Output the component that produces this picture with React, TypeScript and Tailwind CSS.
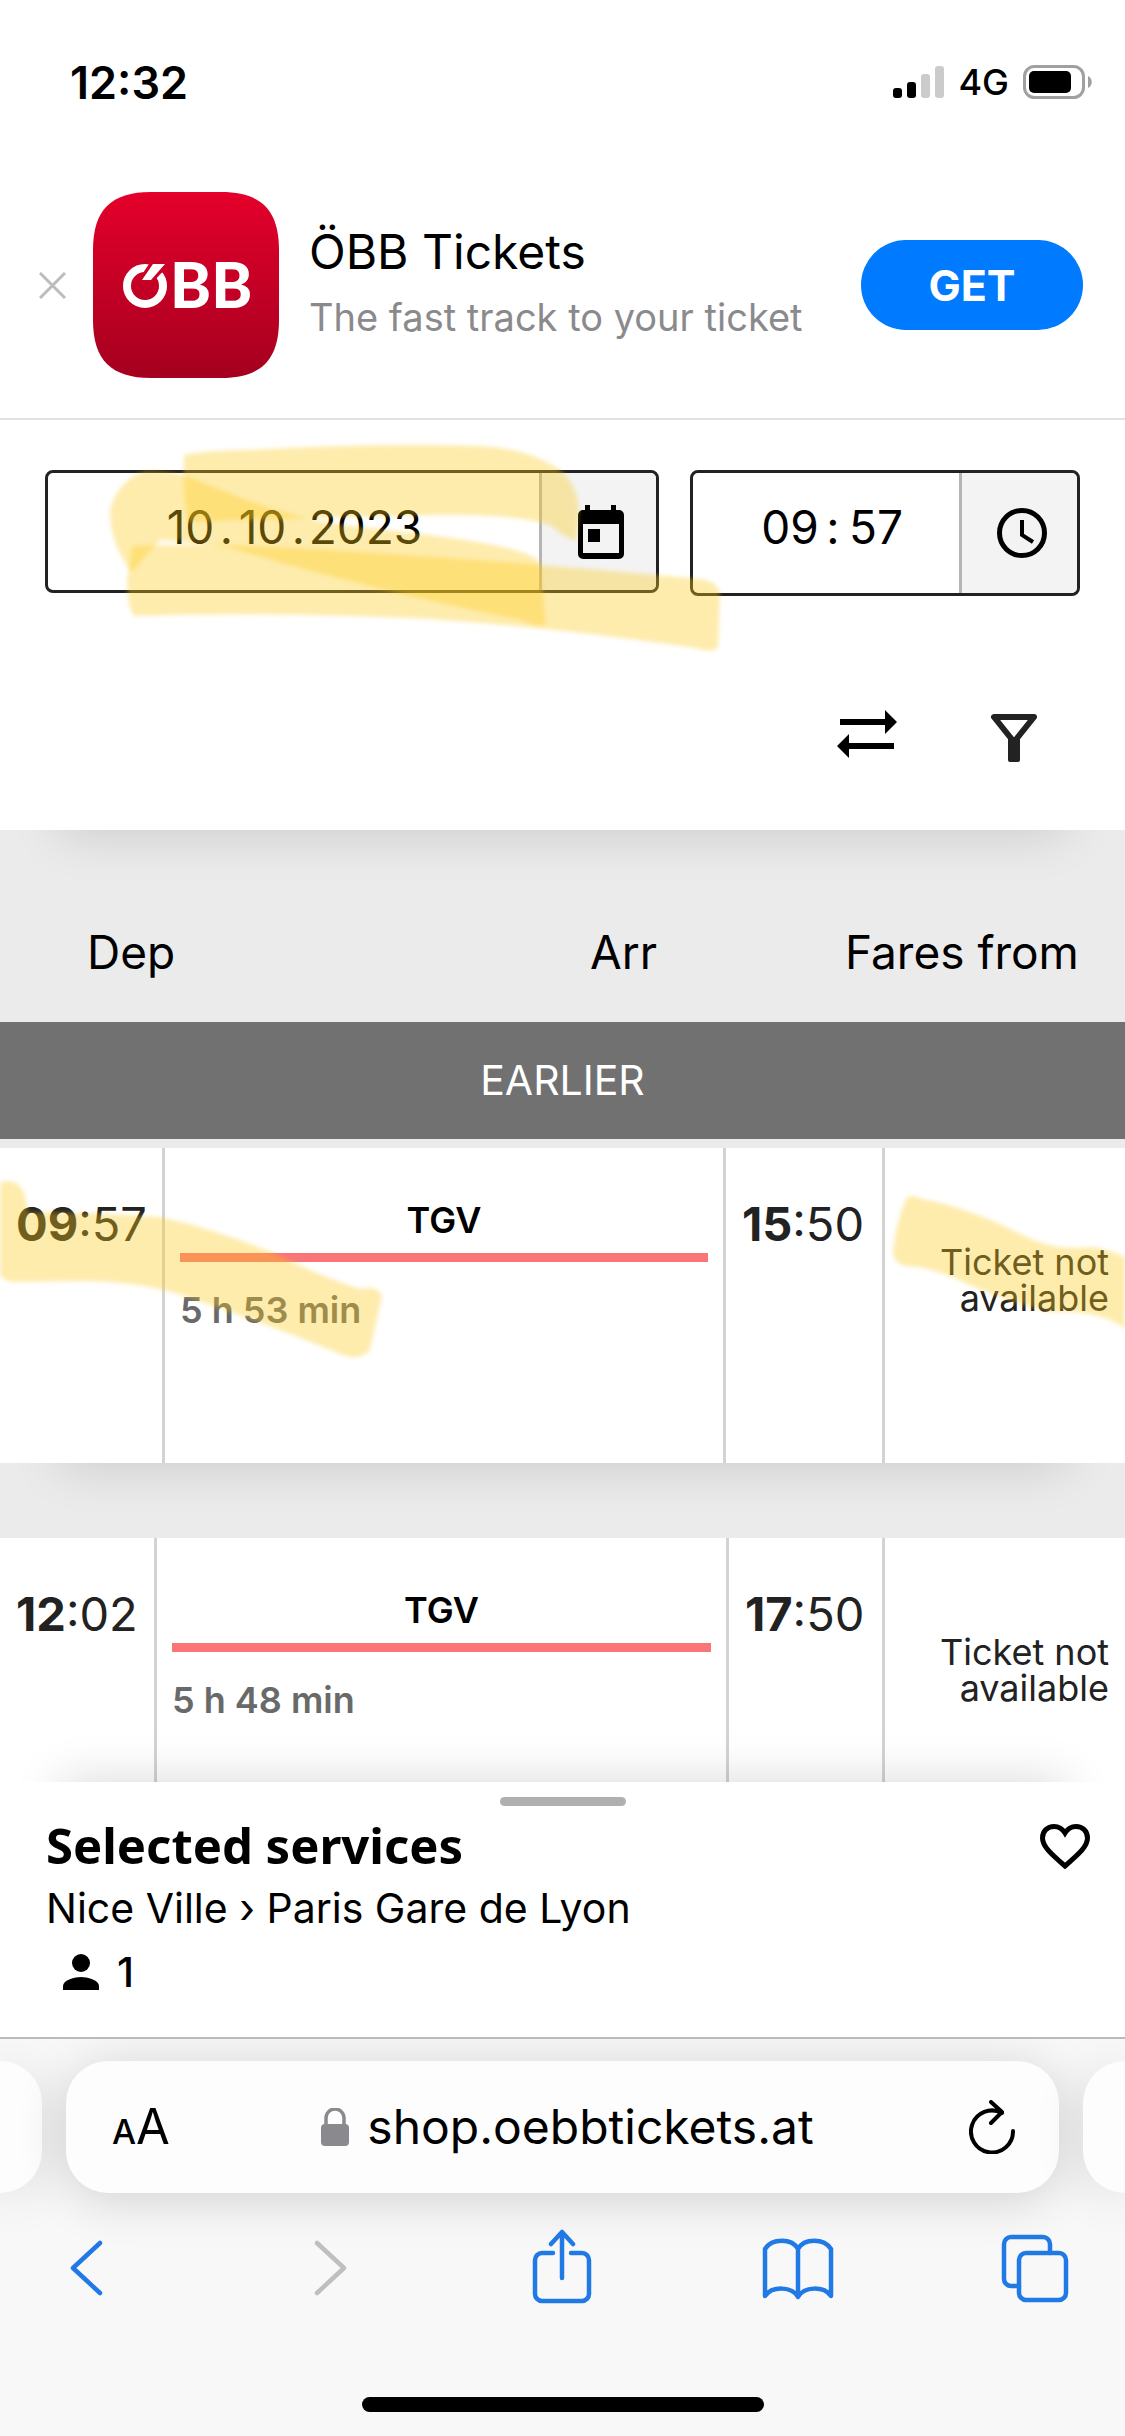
import clsx from 'clsx'
import type { ReactNode } from 'react'

const connections = [
  { dep: '09:57', arr: '15:50', train: 'TGV', duration: '5 h 53 min', cols: 'grid-cols-[162px_1fr_156px_243px]', height: 'h-[315px]', marked: true },
  { dep: '12:02', arr: '17:50', train: 'TGV', duration: '5 h 48 min', cols: 'grid-cols-[154px_1fr_153px_243px]', height: 'h-[244px]', marked: false },
]

function StatusBar() {
  return (
    <div className="flex h-[164px] items-center justify-between pl-[70px] pr-[32px]">
      <span className="text-[45px] font-semibold leading-none">12:32</span>
      <div className="flex items-center gap-[14px]">
        <svg width="51" height="32" viewBox="0 0 51 32" aria-hidden="true">
          <rect x="0" y="22" width="9" height="10" rx="3" />
          <rect x="14" y="16" width="9" height="16" rx="3" />
          <rect x="28" y="8" width="9" height="24" rx="3" fill="#cbcbcb" />
          <rect x="42" y="0" width="9" height="32" rx="3" fill="#cbcbcb" />
        </svg>
        <span className="text-[36px] font-medium leading-none">4G</span>
        <svg width="70" height="34" viewBox="0 0 70 34" aria-hidden="true">
          <rect x="1.5" y="1.5" width="59" height="31" rx="10" fill="none" stroke="#a0a0a0" strokeWidth="3" />
          <rect x="6" y="6" width="42" height="22" rx="5" />
          <path d="M65 11c5 2 5 10 0 12z" fill="#a0a0a0" />
        </svg>
      </div>
    </div>
  )
}

function AppLogo() {
  return (
    <svg className="shrink-0" width="186" height="186" viewBox="0 0 186 186" role="img" aria-label="ÖBB">
      <defs>
        <linearGradient id="logo-red" x1="0" y1="0" x2="0" y2="1">
          <stop offset="0" stopColor="#e4002b" />
          <stop offset="1" stopColor="#a5001f" />
        </linearGradient>
      </defs>
      <path
        d="M58 0H128C168 0 186 18 186 58V128C186 168 168 186 128 186H58C18 186 0 168 0 128V58C0 18 18 0 58 0Z"
        fill="url(#logo-red)"
      />
      <circle cx="52" cy="94" r="18" fill="none" stroke="#fff" strokeWidth="8" />
      <path d="M44 90L58 69H76V73L60 90Z" fill="#ca0027" />
      <path d="M49 88L60 72H72L58 88Z" fill="#fff" />
      <text x="77" y="116" fill="#fff" fontFamily="Lato" fontWeight="900" fontSize="62">BB</text>
    </svg>
  )
}

function AppBanner() {
  return (
    <div className="flex h-[256px] items-center border-b-2 border-[#e2e2e2] pb-3 pl-[39px] pr-[42px]">
      <button type="button" aria-label="Close">
        <svg width="27" height="27" viewBox="0 0 27 27" stroke="#bcbcbc" strokeWidth="3" aria-hidden="true">
          <path d="M1 1L26 26M26 1L1 26" />
        </svg>
      </button>
      <div className="ml-[27px]">
        <AppLogo />
      </div>
      <div className="ml-[30px] flex-1 pb-1">
        <div className="text-[48px] leading-[56px]">ÖBB Tickets</div>
        <div className="mt-3 whitespace-nowrap text-[38px] leading-[50px] text-[#8a8a8d]">The fast track to your ticket</div>
      </div>
      <button type="button" className="h-[90px] w-[222px] rounded-full bg-[#007aff] text-[43px] font-bold text-white">
        GET
      </button>
    </div>
  )
}

function Digits({ label, value, width }: { label: string; value: string; width: string }) {
  return <input aria-label={label} defaultValue={value} className={clsx('bg-transparent text-center outline-none', width)} />
}

function SearchBar() {
  return (
    <div className="relative z-10 bg-white pb-[68px] pt-[50px] shadow-[0_60px_50px_-60px_rgba(0,0,0,0.16)]">
      <div className="flex items-start gap-[31px] pl-[45px] pr-[45px]">
        <div className="flex h-[123px] flex-1 rounded-lg border-[3px] border-[#222] text-[46px]">
          <div className="flex flex-1 items-center justify-center pb-2">
            <Digits label="Day" value="10" width="w-[58px]" />
            <span className="w-[14px] text-center">.</span>
            <Digits label="Month" value="10" width="w-[58px]" />
            <span className="w-[14px] text-center">.</span>
            <Digits label="Year" value="2023" width="w-[120px]" />
          </div>
          <button type="button" aria-label="Open calendar" className="flex w-[117px] items-center justify-center rounded-r-md border-l-[3px] border-[#b5b5b5] bg-[#f3f3f3] pl-1">
            <svg width="46" height="54" viewBox="0 0 46 54" aria-hidden="true">
              <path d="M7 0h5v5h21V0h5v5h3a5 5 0 0 1 5 5v39a5 5 0 0 1-5 5H5a5 5 0 0 1-5-5V10a5 5 0 0 1 5-5h2zM5 19v29h36V19z" fillRule="evenodd" />
              <path d="M10 24h12v13H10z" />
            </svg>
          </button>
        </div>
        <div className="flex h-[126px] w-[390px] rounded-lg border-[3px] border-[#222] text-[46px]">
          <div className="flex flex-1 items-center justify-center pb-[11px] pl-[14px]">
            <Digits label="Hour" value="09" width="w-[64px]" />
            <span className="w-[22px] text-center">:</span>
            <Digits label="Minute" value="57" width="w-[64px]" />
          </div>
          <button type="button" aria-label="Choose time" className="flex w-[118px] items-center justify-center rounded-r-md border-l-[3px] border-[#b5b5b5] bg-[#f3f3f3] pl-1">
            <svg width="50" height="50" viewBox="0 0 50 50" fill="none" stroke="#000" aria-hidden="true">
              <circle cx="25" cy="25" r="22.5" strokeWidth="5" />
              <path d="M25 12v15l11 7" strokeWidth="4" />
            </svg>
          </button>
        </div>
      </div>
      <div className="mt-[114px] flex items-start justify-end gap-[93px] pr-[87px]">
        <button type="button" aria-label="Swap direction">
          <svg width="60" height="48" viewBox="0 0 60 48" aria-hidden="true">
            <path d="M3 9h45V0l12 12-12 12v-9H3zM57 33H12v-9L0 36l12 12v-9h45z" />
          </svg>
        </button>
        <button type="button" aria-label="Filter">
          <svg width="48" height="52" viewBox="0 0 48 52" aria-hidden="true">
            <path d="M4 7H44L24 32Z" fill="none" stroke="#222" strokeWidth="6" strokeLinejoin="round" />
            <path d="M18 29h12v21a2 2 0 0 1-2 2h-8a2 2 0 0 1-2-2z" fill="#222" />
          </svg>
        </button>
      </div>

      {/* marker strokes over the date */}
      <svg className="pointer-events-none absolute left-0 top-0 blur-[2px]" width="760" height="250" viewBox="0 420 760 250" fill="#fbca1b" fillOpacity="0.36" aria-hidden="true">
        <path d="M184 456Q190 451 250 450Q370 443 480 446Q530 449 560 470Q578 485 579 512L576 541Q562 536 552 526Q520 514 440 515Q300 518 188 522Q182 488 184 456Z" />
        <path d="M145 471Q170 470 192 478C250 502 300 522 370 528C430 535 530 545 540 563L546 624Q540 629 525 621Q370 590 230 548Q190 542 160 540L132 572Q110 545 110 510Q118 480 145 471Z" />
        <path d="M132 546Q220 542 360 552Q520 562 700 579Q718 581 720 594L718 648Q710 653 695 648Q560 628 430 619Q280 612 134 616Q128 610 127 580Z" />
      </svg>
    </div>
  )
}

function Time({ value, className }: { value: string; className: string }) {
  const [hours, minutes] = value.split(':')
  return (
    <td className={clsx('whitespace-nowrap pt-[49px] text-[47px] leading-[54px] text-[#222]', className)}>
      <b className="font-bold">{hours}</b>:{minutes}
    </td>
  )
}

function Connection({ item }: { item: (typeof connections)[number] }) {
  return (
    <tr className={clsx('relative grid bg-white', item.cols, item.height, item.marked && 'shadow-[0_60px_50px_-60px_rgba(0,0,0,0.16)]')}>
      <Time value={item.dep} className="pl-4" />
      <td className="border-x-[3px] border-[#d3d3d3] px-[15px] pt-[50px]">
        <div className="text-center text-[36px] font-semibold leading-[44px]">{item.train}</div>
        <div className="mt-[11px] h-[9px] bg-[#f97578]" />
        <div className="mt-[26px] text-[36px] font-semibold leading-[44px] text-[#696969]">{item.duration}</div>
      </td>
      <Time value={item.arr} className="pl-4" />
      <td className="border-l-[3px] border-[#d3d3d3] pl-12 pr-4 pt-[96px] text-right text-[36px] leading-[36px] text-[#222]">
        Ticket not available
      </td>
      {item.marked && (
        <td aria-hidden="true" className="pointer-events-none absolute inset-0 flex justify-between overflow-hidden">
          <svg className="blur-[2px]" width="400" height="315" viewBox="0 1148 400 315" fill="#fbca1b" fillOpacity="0.36">
            <path d="M-6 1185Q8 1178 18 1184Q25 1190 28 1212Q90 1212 160 1217Q220 1230 280 1256Q320 1276 360 1289Q378 1285 382 1296L370 1350Q360 1362 340 1354Q270 1325 190 1298Q150 1283 90 1281L12 1282Q0 1280-6 1265Z" />
          </svg>
          <svg className="blur-[2px]" width="245" height="315" viewBox="880 1148 245 315" fill="#fbca1b" fillOpacity="0.36">
            <path d="M906 1199Q910 1193 922 1199Q970 1208 1020 1234Q1055 1252 1090 1247Q1112 1249 1130 1260V1334Q1110 1310 1050 1312Q1000 1300 950 1276Q920 1265 905 1266Q893 1262 893 1252Q896 1222 906 1199Z" />
          </svg>
        </td>
      )}
    </tr>
  )
}

function Results() {
  return (
    <main className="bg-[#ebebeb]">
      <table className="block w-full font-normal">
        <thead className="block">
          <tr className="flex h-[192px] items-end pb-[42px] pl-[87px] pr-12 text-[46px] leading-[56px]">
            <th className="flex-1 text-left font-normal">Dep</th>
            <th className="w-[255px] text-left font-normal">Arr</th>
            <th className="w-[232px] whitespace-nowrap text-right font-normal">Fares from</th>
          </tr>
          <tr className="block">
            <th className="block font-normal">
              <button type="button" className="h-[117px] w-full bg-[#717171] text-[41px] text-white">EARLIER</button>
            </th>
          </tr>
        </thead>
        <tbody className="flex flex-col gap-[75px] pt-[9px]">
          {connections.map(item => (
            <Connection key={item.dep} item={item} />
          ))}
        </tbody>
      </table>
    </main>
  )
}

function SelectedServices() {
  return (
    <section className="relative h-[255px] bg-white pt-[15px] shadow-[0_-60px_50px_-60px_rgba(0,0,0,0.16)]">
      <div className="mx-auto h-[9px] w-[126px] rounded-full bg-[#b0b0b0]" />
      <div className="flex items-center justify-between pl-[46px] pr-[35px]">
        <h2 className="font-['Noto_Sans'] text-[49px] font-bold leading-[78px]">Selected services</h2>
        <button type="button" aria-label="Add to favourites" className="pt-1">
          <svg width="50" height="46" viewBox="0 0 50 46" fill="none" stroke="#000" strokeWidth="5" aria-hidden="true">
            <path d="M25 42C10 29 2.500 22 2.500 14C2.500 7 7.500 2.500 14 2.500C18.500 2.500 22.500 5 25 9C27.500 5 31.500 2.500 36 2.500C42.500 2.500 47.500 7 47.500 14C47.500 22 40 29 25 42Z" />
          </svg>
        </button>
      </div>
      <p className="pl-[46px] text-[41px] leading-[48px]">Nice Ville › Paris Gare de Lyon</p>
      <p className="mt-4 flex items-center gap-[18px] pl-[63px] text-[41px] font-medium leading-[48px]">
        <svg width="36" height="36" viewBox="0 0 36 36" aria-hidden="true">
          <circle cx="18" cy="9" r="9" />
          <path d="M0 36v-4c0-6 12-9 18-9s18 3 18 9v4z" />
        </svg>
        1
      </p>
    </section>
  )
}

function ToolButton({ label, color = '#2079e4', children }: { label: string; color?: string; children: ReactNode }) {
  return (
    <button type="button" aria-label={label}>
      <svg width="76" height="76" viewBox="0 0 76 76" fill="none" stroke={color} strokeWidth="4.500" strokeLinecap="round" strokeLinejoin="round" aria-hidden="true">
        {children}
      </svg>
    </button>
  )
}

function BrowserBar() {
  return (
    <footer className="relative overflow-hidden border-t-2 border-[#bababa] bg-[#f8f8f9] pb-6 pt-[22px]">
      <div className="flex gap-6">
        <div className="h-[132px] w-[42px] rounded-r-[42px] bg-[#fdfdfd] shadow-[0_6px_50px_rgba(0,0,0,0.12)]" />
        <div className="flex h-[132px] flex-1 items-center justify-between rounded-[42px] bg-[#fdfdfd] pl-[46px] pr-[44px] shadow-[0_6px_50px_rgba(0,0,0,0.16)]">
          <button type="button" aria-label="Page settings" className="flex items-baseline text-[34px] font-medium">
            A<span className="text-[49px] font-normal">A</span>
          </button>
          <a href="#address" className="flex items-center gap-[18px] pr-1 text-[48px]">
            <svg width="28" height="38" viewBox="0 0 28 38" aria-hidden="true">
              <rect y="16" width="28" height="22" rx="4" fill="#8a8a8e" />
              <path d="M5 18v-8a9 9 0 0 1 18 0v8" fill="none" stroke="#8a8a8e" strokeWidth="3.500" />
            </svg>
            shop.oebbtickets.at
          </a>
          <button type="button" aria-label="Reload">
            <svg width="46" height="54" viewBox="0 0 46 54" fill="none" stroke="#000" strokeWidth="4" strokeLinecap="round" strokeLinejoin="round" aria-hidden="true">
              <path d="M44 31A21 21 0 1 1 33 13M22 2L33 12L22 23" />
            </svg>
          </button>
        </div>
        <div className="h-[132px] w-[42px] rounded-l-[42px] bg-[#fdfdfd] shadow-[0_6px_50px_rgba(0,0,0,0.12)]" />
      </div>
      <div className="relative mt-[36px] flex justify-between pl-[49px] pr-[52px]">
        <ToolButton label="Back"><path d="M51 14L24 39L51 64" /></ToolButton>
        <ToolButton label="Forward" color="#bfbfc1"><path d="M31 14L58 39L31 64" /></ToolButton>
        <ToolButton label="Share">
          <path d="M30 24H19a7 7 0 0 0-7 7v34a7 7 0 0 0 7 7h40a7 7 0 0 0 7-7V31a7 7 0 0 0-7-7H48M39 49V4M28 15L39 3L50 15" />
        </ToolButton>
        <ToolButton label="Bookmarks">
          <path d="M38 20C32 9 12 9 5 20V67C12 57 32 57 38 68C44 57 64 57 71 67V20C64 9 44 9 38 20ZM38 20V67" />
        </ToolButton>
        <ToolButton label="Tabs">
          <rect x="22" y="24" width="47" height="47" rx="7" />
          <path d="M22 57H14a7 7 0 0 1-7-7V15a7 7 0 0 1 7-7H46a7 7 0 0 1 7 7V24" />
        </ToolButton>
      </div>
      <div className="mx-auto mt-[92px] h-[15px] w-[402px] rounded-full bg-black" />
    </footer>
  )
}

export default function App() {
  return (
    <div className="bg-white font-['Inter',sans-serif] text-black">
      <StatusBar />
      <AppBanner />
      <SearchBar />
      <Results />
      <SelectedServices />
      <BrowserBar />
    </div>
  )
}
